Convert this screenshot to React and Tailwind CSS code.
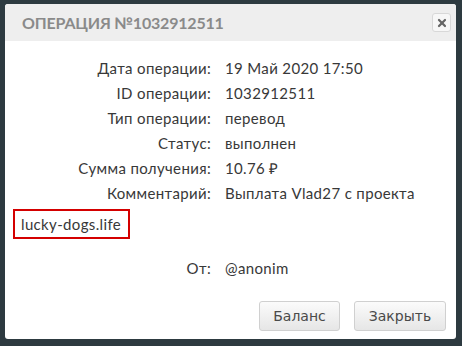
import { X } from 'lucide-react'

const rows = [
  ['Дата операции:', '19 Май 2020 17:50'],
  ['ID операции:', '1032912511'],
  ['Тип операции:', 'перевод'],
  ['Статус:', 'выполнен'],
  ['Сумма получения:', '10.76 ₽'],
  ['Комментарий:', 'Выплата Vlad27 с проекта'],
]

const Row = ({ label, value }) => (
  <div className="flex h-[25px] items-center">
    <div className="w-[206px] shrink-0 text-right">{label}</div>
    <div className="pl-[14px] whitespace-nowrap">{value}</div>
  </div>
)

export default function App() {
  return (
    <div className="h-[346px] w-[462px] bg-[#2d3a40] pl-[5px] pr-[6px] pt-[4px] pb-[7px]">
      <div className="flex h-full flex-col overflow-hidden rounded-[3px] bg-white">
        {/* Header */}
        <div className="flex h-[37px] shrink-0 items-center justify-between bg-[#eeeeee] pl-[17px] pr-[5px]">
          <span
            className="text-[16px] font-bold tracking-[-0.2px] text-[#8a8a8a]"
            style={{ fontFamily: 'Lato, sans-serif' }}
          >
            ОПЕРАЦИЯ №1032912511
          </span>
          <button className="flex h-[19px] w-[19px] items-center justify-center rounded-[3px] border border-[#d8d8d8] bg-[#f7f7f7]">
            <X className="h-[12px] w-[12px] text-[#666666]" strokeWidth={4.5} />
          </button>
        </div>

        {/* Body */}
        <div
          className="flex flex-1 flex-col pt-[15px] text-[15px] tracking-[0.35px] text-[#383838]"
          style={{ fontFamily: 'Lato, sans-serif' }}
        >
          {rows.map(([l, v]) => (
            <Row key={l} label={l} value={v} />
          ))}
          <div className="pl-[8px] pt-[3px]">
            <div className="inline-flex h-[30px] items-center border-2 border-[#d40000] pl-[6px] pr-[7px]">
              lucky-dogs.life
            </div>
          </div>
          <div className="mt-[17px]">
            <Row label="От:" value="@anonim" />
          </div>
          <div
            className="mt-auto flex justify-end gap-[14px] pb-[8px] pr-[10px] text-[14px] tracking-normal text-[#4a4a4a]"
            style={{ fontFamily: '"DejaVu Sans", sans-serif' }}
          >
            <button className="h-[30px] w-[81px] rounded-[3px] border border-[#d0d0d0] bg-gradient-to-b from-[#fbfbfb] to-[#e6e6e6]">
              Баланс
            </button>
            <button className="h-[30px] w-[92px] rounded-[3px] border border-[#d0d0d0] bg-gradient-to-b from-[#fbfbfb] to-[#e6e6e6]">
              Закрыть
            </button>
          </div>
        </div>
      </div>
    </div>
  )
}
